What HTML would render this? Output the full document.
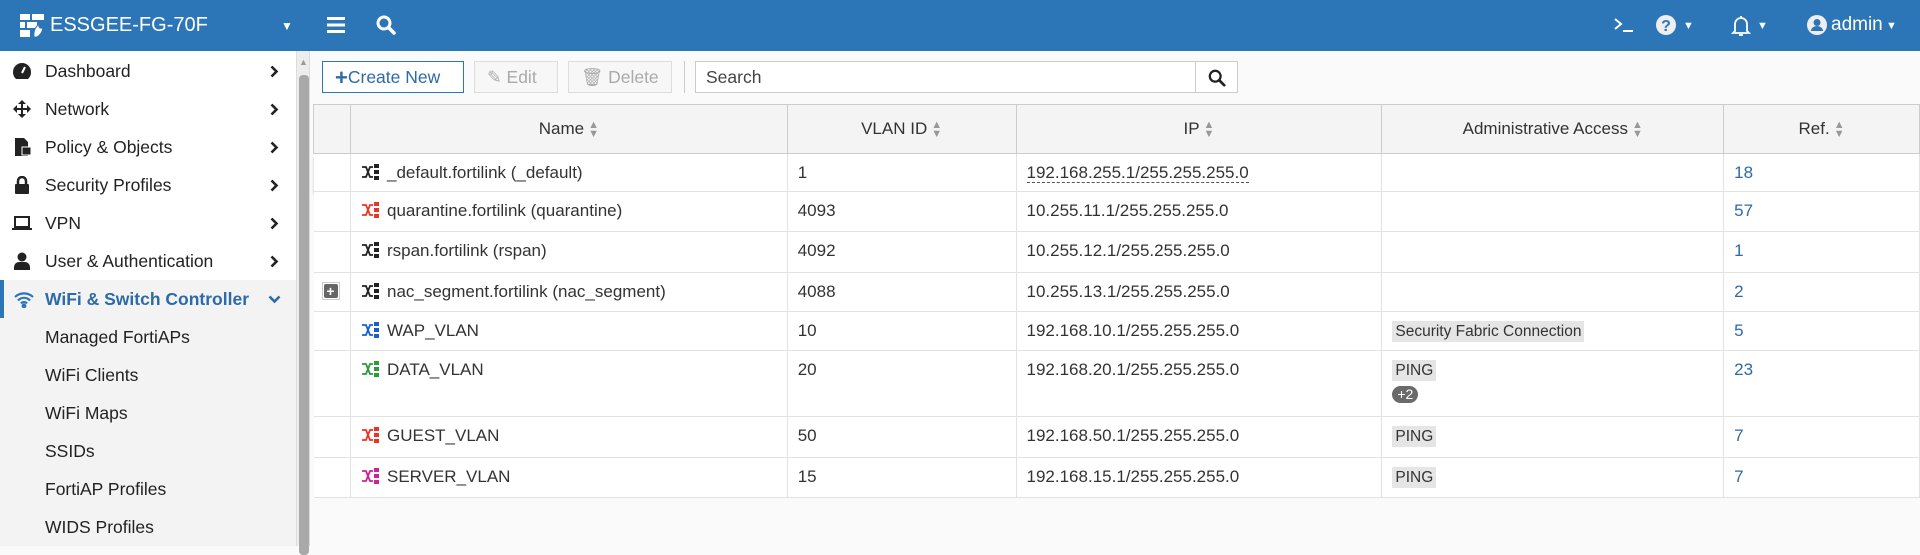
<!DOCTYPE html>
<html><head><meta charset="utf-8"><style>
*{box-sizing:border-box;margin:0;padding:0}
body{width:1920px;height:546px;overflow:hidden;font-family:"Liberation Sans",sans-serif;background:#fafafa;position:relative;color:#333}
.top{position:absolute;left:0;top:0;width:1920px;height:51px;background:#2c76b8;color:#fff}
.top .t{position:absolute;top:14px;font-size:19px}
.side{position:absolute;left:0;top:51px;width:296px;height:495px;background:#fff}
.si{position:absolute;left:0;width:296px;height:38px;font-size:17.5px;color:#222;line-height:38px}
.si .tx{position:absolute;left:45px}
.si .ic{position:absolute;left:12px;top:10px;width:20px;height:18px}
.si .ch{position:absolute;left:270px;top:13px;width:9px;height:13px}
.sub{background:#f3f3f3}
.sb{position:absolute;left:296px;top:51px;width:14px;height:495px;background:#ededed;border-left:1px solid #ddd;border-right:1px solid #ddd}
.thumb{position:absolute;left:2px;top:24px;width:10px;height:480px;background:#a9a9a9;border-radius:4px}
.btn{position:absolute;top:61px;height:32px;border:1px solid #ddd;background:#f7f7f7;color:#aaa;font-size:17.5px;line-height:30px}
table{position:absolute;left:313px;top:104px;width:1607px;border-collapse:collapse;font-size:17px}
th{height:49px;background:#f4f4f4;font-weight:normal;color:#333;border:1px solid #ccc;text-align:center}
td{border-bottom:1px solid #e2e2e2;border-right:1px solid #e2e2e2;padding-left:10px;vertical-align:top;padding-top:9px;background:#fff}
td:first-child{padding:0}
.srt{display:inline-block;vertical-align:middle;margin-left:4px;color:#999;font-size:11px;line-height:9px}
.ref{color:#2c6aa8}
.tag{background:#e5e5e5;padding:2px 3px;font-size:15.5px}
.nm svg{vertical-align:-3px;margin-right:6px}
</style></head><body>
<div class="top">
 <svg style="position:absolute;left:20px;top:14px" width="24" height="24" viewBox="0 0 24 24" fill="#fff"><rect x="0" y="0" width="10" height="6"/><rect x="12" y="0" width="12" height="6"/><rect x="0" y="8" width="5" height="6"/><rect x="7" y="8" width="10" height="6"/><rect x="0" y="16" width="10" height="7"/><path d="M14 23 Q13 15 19 10 Q18 15 23 14 Q22 20 17 23Z" fill="#fff" stroke="#2c76b8" stroke-width="1"/></svg>
 <div class="t" style="left:50px;font-size:20px">ESSGEE-FG-70F</div>
 <div class="t" style="left:281px;font-size:12px;top:19px">▼</div>
 <svg style="position:absolute;left:327px;top:16px" width="18" height="18" viewBox="0 0 18 18" fill="#fff"><rect y="1" width="18" height="3"/><rect y="7.5" width="18" height="3"/><rect y="14" width="18" height="3"/></svg>
 <svg style="position:absolute;left:376px;top:15px" width="20" height="20" viewBox="0 0 20 20"><circle cx="8" cy="8" r="6" stroke="#fff" stroke-width="3" fill="none"/><path d="M12.5 12.5L18 18" stroke="#fff" stroke-width="3.5" stroke-linecap="round"/></svg>
 <svg style="position:absolute;left:1614px;top:17px" width="20" height="16" viewBox="0 0 20 16" fill="none" stroke="#fff" stroke-width="2"><path d="M1 2l6 5-6 5M9 14h10"/></svg>
 <svg style="position:absolute;left:1655px;top:14px" width="22" height="22" viewBox="0 0 22 22"><circle cx="11" cy="11" r="10" fill="#eee"/><text x="11" y="17" text-anchor="middle" font-size="16" font-weight="bold" fill="#2c76b8" font-family="Liberation Sans">?</text></svg>
 <div class="t" style="left:1683px;font-size:11px;top:20px">▼</div>
 <svg style="position:absolute;left:1731px;top:14px" width="20" height="23" viewBox="0 0 20 23" fill="none" stroke="#fff" stroke-width="1.8"><path d="M10 2v2M4 17V10a6 6 0 0 1 12 0v7l2 2H2z"/><path d="M8 21h4"/></svg>
 <div class="t" style="left:1757px;font-size:11px;top:20px">▼</div>
 <svg style="position:absolute;left:1806px;top:14px" width="22" height="22" viewBox="0 0 22 22"><circle cx="11" cy="11" r="10" fill="#eee"/><circle cx="11" cy="8.5" r="3.5" fill="#2c76b8"/><path d="M5 17a6 5 0 0 1 12 0" fill="#2c76b8"/></svg>
 <div class="t" style="left:1831px;font-size:19px">admin</div>
 <div class="t" style="left:1886px;font-size:11px;top:20px">▼</div>
</div>
<div class="side">
 <div class="si" style="top:1px"><svg class="ic" viewBox="0 0 20 18"><path d="M10 1a9 9 0 0 0-9 9c0 3 1 5 3 7h12c2-2 3-4 3-7a9 9 0 0 0-9-9z" fill="#222"/><path d="M10 11l3-6" stroke="#fff" stroke-width="2"/></svg><span class="tx">Dashboard</span><svg class="ch" viewBox="0 0 9 13"><path d="M1.5 1.5l5 5-5 5" stroke="#222" stroke-width="2.6" fill="none"/></svg></div>
 <div class="si" style="top:39px"><svg class="ic" viewBox="0 0 20 18"><path d="M10 0l4 4h-3v4h4V5l4 4-4 4v-3h-4v4h3l-4 4-4-4h3v-4H5v3L1 9l4-4v3h4V4H6z" fill="#222"/></svg><span class="tx">Network</span><svg class="ch" viewBox="0 0 9 13"><path d="M1.5 1.5l5 5-5 5" stroke="#222" stroke-width="2.6" fill="none"/></svg></div>
 <div class="si" style="top:77px"><svg class="ic" viewBox="0 0 20 18"><path d="M3 0h9l4 4v14H3z" fill="#222"/><rect x="10" y="9" width="9" height="8" fill="#222" stroke="#fff"/></svg><span class="tx">Policy &amp; Objects</span><svg class="ch" viewBox="0 0 9 13"><path d="M1.5 1.5l5 5-5 5" stroke="#222" stroke-width="2.6" fill="none"/></svg></div>
 <div class="si" style="top:115px"><svg class="ic" viewBox="0 0 20 18"><rect x="3" y="8" width="14" height="10" rx="1" fill="#222"/><path d="M6 8V5a4 4 0 0 1 8 0v3" stroke="#222" stroke-width="2.5" fill="none"/></svg><span class="tx">Security Profiles</span><svg class="ch" viewBox="0 0 9 13"><path d="M1.5 1.5l5 5-5 5" stroke="#222" stroke-width="2.6" fill="none"/></svg></div>
 <div class="si" style="top:153px"><svg class="ic" viewBox="0 0 20 18"><rect x="3" y="3" width="14" height="10" fill="none" stroke="#222" stroke-width="2"/><rect x="0" y="14" width="20" height="2" fill="#222"/></svg><span class="tx">VPN</span><svg class="ch" viewBox="0 0 9 13"><path d="M1.5 1.5l5 5-5 5" stroke="#222" stroke-width="2.6" fill="none"/></svg></div>
 <div class="si" style="top:191px"><svg class="ic" viewBox="0 0 20 18"><circle cx="10" cy="5" r="4.5" fill="#222"/><path d="M2 18v-3a5 5 0 0 1 5-5h6a5 5 0 0 1 5 5v3z" fill="#222"/></svg><span class="tx">User &amp; Authentication</span><svg class="ch" viewBox="0 0 9 13"><path d="M1.5 1.5l5 5-5 5" stroke="#222" stroke-width="2.6" fill="none"/></svg></div>
 <div class="si sub" style="top:229px;color:#2c6aa8;font-weight:bold;border-left:4px solid #2c76b8"><svg class="ic" style="left:10px" viewBox="0 0 20 18" fill="none" stroke="#2c76b8" stroke-width="2.2"><path d="M1 7a13 13 0 0 1 18 0M4 10.5a8 8 0 0 1 12 0M7 13.5a4 4 0 0 1 6 0"/><circle cx="10" cy="16" r="1.3" fill="#2c76b8"/></svg><span class="tx" style="left:41px">WiFi &amp; Switch Controller</span><svg style="position:absolute;left:264px;top:15px" width="13" height="9" viewBox="0 0 13 9"><path d="M1.5 1.5l5 5 5-5" stroke="#2c6aa8" stroke-width="2.6" fill="none"/></svg></div>
 <div class="si sub" style="top:267px"><span class="tx">Managed FortiAPs</span></div>
 <div class="si sub" style="top:305px"><span class="tx">WiFi Clients</span></div>
 <div class="si sub" style="top:343px"><span class="tx">WiFi Maps</span></div>
 <div class="si sub" style="top:381px"><span class="tx">SSIDs</span></div>
 <div class="si sub" style="top:419px"><span class="tx">FortiAP Profiles</span></div>
 <div class="si sub" style="top:457px"><span class="tx">WIDS Profiles</span></div>
</div>
<div class="sb"><div style="position:absolute;left:2px;top:6px;font-size:9px;color:#999">▲</div><div class="thumb"></div></div>
<div class="btn" style="left:322px;width:142px;background:#fff;border-color:#2c76b8;color:#2c6aa8;padding-left:12px"><b style="font-size:22px;line-height:26px;vertical-align:-2px">+</b>Create New</div>
<div class="btn" style="left:474px;width:84px;padding-left:12px">✎ Edit</div>
<div class="btn" style="left:568px;width:104px;padding-left:12px">🗑 Delete</div>
<div style="position:absolute;left:684px;top:61px;width:1px;height:32px;background:#ccc"></div>
<div style="position:absolute;left:695px;top:61px;width:543px;height:32px;border:1px solid #ccc;background:#fff;font-size:17.5px;line-height:30px;padding-left:10px;color:#444">Search</div>
<div style="position:absolute;left:1195px;top:61px;width:43px;height:32px;border:1px solid #ccc;background:#fff"><svg style="position:absolute;left:12px;top:7px" width="18" height="18" viewBox="0 0 20 20"><circle cx="8" cy="8" r="6" stroke="#222" stroke-width="2.5" fill="none"/><path d="M12.5 12.5L18 18" stroke="#222" stroke-width="3" stroke-linecap="round"/></svg></div>
<table>
<colgroup><col style="width:37px"><col style="width:437px"><col style="width:229px"><col style="width:366px"><col style="width:342px"><col style="width:196px"></colgroup>
<tr><th></th><th>Name<span class="srt">▲<br>▼</span></th><th>VLAN ID<span class="srt">▲<br>▼</span></th><th>IP<span class="srt">▲<br>▼</span></th><th>Administrative Access<span class="srt">▲<br>▼</span></th><th>Ref.<span class="srt">▲<br>▼</span></th></tr>
<tr style="height:38px;box-shadow:0 3px 3px rgba(0,0,0,.2)"><td></td><td class="nm"><svg width="20" height="18" viewBox="0 0 20 18"><g fill="#222"><path d="M1 4h4l4 10h3M1 14h4l4-10h3" stroke="#222" stroke-width="1.8" fill="none"/><rect x="13" y="1" width="5" height="4"/><rect x="13" y="7" width="5" height="4"/><rect x="13" y="13" width="5" height="4"/></g></svg>_default.fortilink (_default)</td><td>1</td><td><span style="border-bottom:1px dashed #555">192.168.255.1/255.255.255.0</span></td><td></td><td class="ref">18</td></tr>
<tr style="height:40px"><td></td><td class="nm"><svg width="20" height="18" viewBox="0 0 20 18"><g fill="#e32"><path d="M1 4h4l4 10h3M1 14h4l4-10h3" stroke="#e32" stroke-width="1.8" fill="none"/><rect x="13" y="1" width="5" height="4"/><rect x="13" y="7" width="5" height="4"/><rect x="13" y="13" width="5" height="4"/></g></svg>quarantine.fortilink (quarantine)</td><td>4093</td><td>10.255.11.1/255.255.255.0</td><td></td><td class="ref">57</td></tr>
<tr style="height:41px"><td></td><td class="nm"><svg width="20" height="18" viewBox="0 0 20 18"><g fill="#222"><path d="M1 4h4l4 10h3M1 14h4l4-10h3" stroke="#222" stroke-width="1.8" fill="none"/><rect x="13" y="1" width="5" height="4"/><rect x="13" y="7" width="5" height="4"/><rect x="13" y="13" width="5" height="4"/></g></svg>rspan.fortilink (rspan)</td><td>4092</td><td>10.255.12.1/255.255.255.0</td><td></td><td class="ref">1</td></tr>
<tr style="height:39px"><td><div style="margin:9px 0 0 8px;width:18px;height:18px;border:1px solid #ccc;padding:1px"><div style="width:14px;height:14px;background:#666;border-radius:2px;color:#fff;font-weight:bold;font-size:14px;line-height:14px;text-align:center">+</div></div></td><td class="nm"><svg width="20" height="18" viewBox="0 0 20 18"><g fill="#222"><path d="M1 4h4l4 10h3M1 14h4l4-10h3" stroke="#222" stroke-width="1.8" fill="none"/><rect x="13" y="1" width="5" height="4"/><rect x="13" y="7" width="5" height="4"/><rect x="13" y="13" width="5" height="4"/></g></svg>nac_segment.fortilink (nac_segment)</td><td>4088</td><td>10.255.13.1/255.255.255.0</td><td></td><td class="ref">2</td></tr>
<tr style="height:39px"><td></td><td class="nm"><svg width="20" height="18" viewBox="0 0 20 18"><g fill="#1a5fd0"><path d="M1 4h4l4 10h3M1 14h4l4-10h3" stroke="#1a5fd0" stroke-width="1.8" fill="none"/><rect x="13" y="1" width="5" height="4"/><rect x="13" y="7" width="5" height="4"/><rect x="13" y="13" width="5" height="4"/></g></svg>WAP_VLAN</td><td>10</td><td>192.168.10.1/255.255.255.0</td><td><span class="tag">Security Fabric Connection</span></td><td class="ref">5</td></tr>
<tr style="height:66px"><td></td><td class="nm"><svg width="20" height="18" viewBox="0 0 20 18"><g fill="#2a9a3a"><path d="M1 4h4l4 10h3M1 14h4l4-10h3" stroke="#2a9a3a" stroke-width="1.8" fill="none"/><rect x="13" y="1" width="5" height="4"/><rect x="13" y="7" width="5" height="4"/><rect x="13" y="13" width="5" height="4"/></g></svg>DATA_VLAN</td><td>20</td><td>192.168.20.1/255.255.255.0</td><td><span class="tag">PING</span><br><span style="display:inline-block;margin-top:6px;background:#6a6a6a;color:#fff;border-radius:9px;font-size:14px;padding:0 5px;line-height:17px">+2</span></td><td class="ref">23</td></tr>
<tr style="height:41px"><td></td><td class="nm"><svg width="20" height="18" viewBox="0 0 20 18"><g fill="#e32"><path d="M1 4h4l4 10h3M1 14h4l4-10h3" stroke="#e32" stroke-width="1.8" fill="none"/><rect x="13" y="1" width="5" height="4"/><rect x="13" y="7" width="5" height="4"/><rect x="13" y="13" width="5" height="4"/></g></svg>GUEST_VLAN</td><td>50</td><td>192.168.50.1/255.255.255.0</td><td><span class="tag">PING</span></td><td class="ref">7</td></tr>
<tr style="height:40px"><td></td><td class="nm"><svg width="20" height="18" viewBox="0 0 20 18"><g fill="#d0209a"><path d="M1 4h4l4 10h3M1 14h4l4-10h3" stroke="#d0209a" stroke-width="1.8" fill="none"/><rect x="13" y="1" width="5" height="4"/><rect x="13" y="7" width="5" height="4"/><rect x="13" y="13" width="5" height="4"/></g></svg>SERVER_VLAN</td><td>15</td><td>192.168.15.1/255.255.255.0</td><td><span class="tag">PING</span></td><td class="ref">7</td></tr>
</table>
</body></html>
